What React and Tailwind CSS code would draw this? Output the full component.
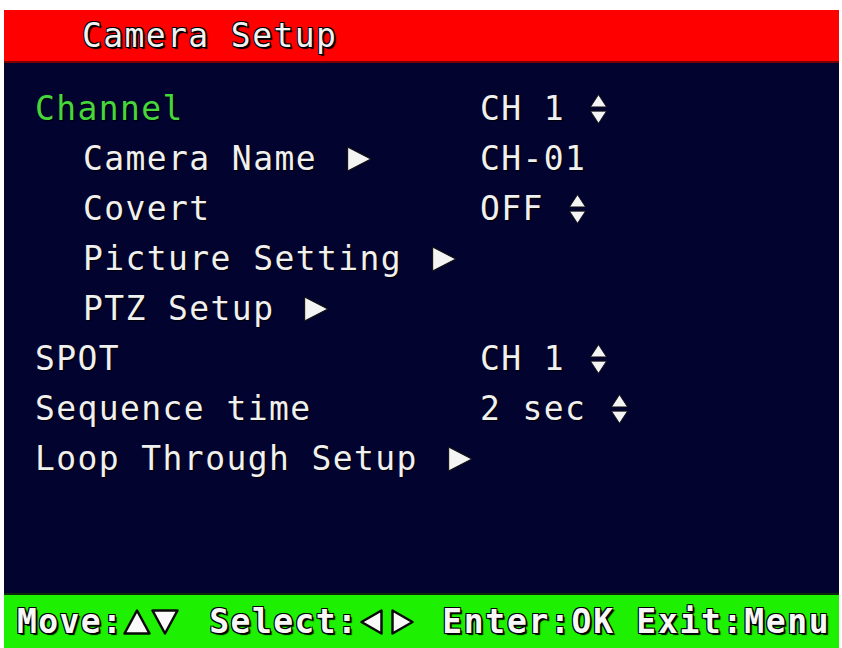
import React from 'react';

const mono = { fontFamily: '"DejaVu Sans Mono", "Liberation Mono", monospace' };

const RightArrow = ({ className = '' }) => (
  <svg width="26" height="26" viewBox="0 0 24 24" className={`shrink-0 ${className}`}>
    <polygon points="1.5,1 23,12 1.5,23" fill="#f4f4f4" stroke="#111" strokeWidth="1" strokeLinejoin="round" />
  </svg>
);

const UpDown = ({ className = '' }) => (
  <svg width="17" height="30" viewBox="0 0 16 28" className={`shrink-0 ${className}`}>
    <polygon points="8,0.5 15.5,12 0.5,12" fill="#f4f4f4" stroke="#111" strokeWidth="0.8" />
    <polygon points="0.5,16 15.5,16 8,27.5" fill="#f4f4f4" stroke="#111" strokeWidth="0.8" />
  </svg>
);

const rows = [
  { label: 'Channel', value: 'CH 1', spin: true, green: true },
  { label: 'Camera Name', sub: true, arrow: true, value: 'CH-01' },
  { label: 'Covert', sub: true, value: 'OFF', spin: true },
  { label: 'Picture Setting', sub: true, arrow: true },
  { label: 'PTZ Setup', sub: true, arrow: true },
  { label: 'SPOT', value: 'CH 1', spin: true },
  { label: 'Sequence time', value: '2 sec', spin: true },
  { label: 'Loop Through Setup', arrow: true },
];

const FootTri = ({ dir }) => {
  const pts = {
    up: '1.5,24.5 14,1.5 26.5,24.5',
    down: '1.5,1.5 26.5,1.5 14,24.5',
    left: '21.5,1.5 21.5,24.5 1.5,13',
    right: '1.5,1.5 1.5,24.5 21.5,13',
  }[dir];
  const w = dir === 'up' || dir === 'down' ? 28 : 23;
  return (
    <svg width={w} height="26" viewBox={`0 0 ${w} 26`} className="shrink-0">
      <polygon points={pts} fill="#fafafa" stroke="#0a0a0a" strokeWidth="2.5" strokeLinejoin="round" />
    </svg>
  );
};

export default function App() {
  const outline = '[text-shadow:1px_1px_0_#000,-1px_-1px_0_#000,1px_-1px_0_#000,-1px_1px_0_#000,2px_2px_1px_#000]';
  return (
    <div className="w-[842px] h-[648px] bg-white pt-[10px] pl-[4px] pr-[3px] overflow-hidden" style={mono}>
      <div className="flex flex-col h-[638px] bg-[#03032f]">
        <div className={`h-[53px] bg-[#ff0000] flex items-center pl-[78px] text-[33px] tracking-[1.4px] text-[#f2f2f2] ${outline} border-b-2 border-[#7a0000]`}>
          Camera Setup
        </div>

        <div className="flex-1 pt-[21px] pl-[31px] text-[33px] tracking-[1.4px] text-[#f0f0f0] [text-shadow:1px_1px_1px_#000]">
          {rows.map((r, i) => (
            <div key={i} className="flex items-center h-[50px]">
              <div className={`w-[445px] flex items-center ${r.sub ? 'pl-[48px]' : ''} ${r.green ? 'text-[#46d63e]' : ''}`}>
                <span className="whitespace-pre">{r.label}</span>
                {r.arrow && <RightArrow className="ml-[29px]" />}
              </div>
              {r.value && (
                <div className="flex items-center">
                  <span className="whitespace-pre">{r.value}</span>
                  <UpDown className={r.spin ? 'ml-[25px]' : 'hidden'} />
                </div>
              )}
            </div>
          ))}
        </div>

        <div className={`h-[55px] bg-[#1df000] flex items-center pl-[13px] text-[33px] font-bold tracking-[1.4px] text-[#f7f7f7] ${outline} border-t-2 border-[#0a2a0a]`}>
          <span className="whitespace-pre">Move:</span>
          <FootTri dir="up" />
          <FootTri dir="down" />
          <span className="whitespace-pre ml-[30px]">Select:</span>
          <span className="ml-[2px] flex gap-[8px]"><FootTri dir="left" /><FootTri dir="right" /></span>
          <span className="whitespace-pre ml-[28px] tracking-[1.7px]">Enter:OK Exit:Menu</span>
        </div>
      </div>
    </div>
  );
}
